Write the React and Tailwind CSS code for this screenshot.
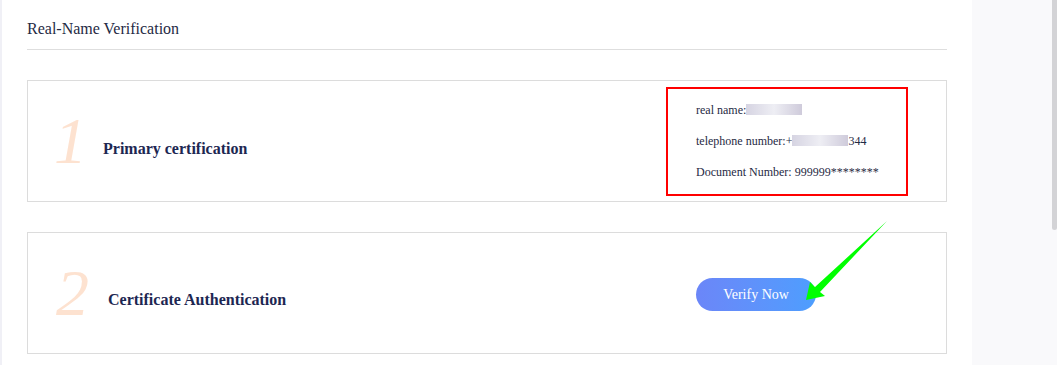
import React from "react";

const serif = { fontFamily: '"Liberation Serif", "Times New Roman", serif' };

function Blurred({ w }) {
  return (
    <span
      className={`inline-block h-[11px] align-[-1px] bg-gradient-to-r from-[#d6d4e2] via-[#eeeef4] to-[#cfcbdb] blur-[0.6px] ${w}`}
    ></span>
  );
}

function ArrowOverlay() {
  return (
    <svg
      className="absolute left-[800px] top-[218px] pointer-events-none"
      width="92"
      height="88"
      viewBox="800 218 92 88"
    >
      <polygon
        points="806,300 810,282 815,287 887,221 820,292 825,296"
        fill="#00ff00"
      />
    </svg>
  );
}

export default function App() {
  return (
    <div className="relative flex h-[365px] w-full overflow-hidden bg-[#f9f9fb]" style={serif}>
      {/* left strip */}
      <div className="w-[2px] bg-[#f0f0f6]"></div>

      {/* Main panel */}
      <div className="w-[970px] bg-white pl-[25px] pr-[25px] pt-[19px]">
        <h1 className="text-[16px] leading-[20px] text-[#1f2a44]" style={serif}>Real-Name Verification</h1>
        <div className="mt-[10px] h-px bg-[#dedede]"></div>

        {/* Step 1 */}
        <div className="mt-[30px] flex h-[122px] items-center border border-[#dcdcdc]">
          <div className="flex flex-1 items-center pl-[26px]">
            <span className="w-[49px] text-[66px] italic leading-none text-[#fde2d0]">1</span>
            <span className="pt-[16px] text-[16px] font-bold text-[#1d2752]" style={serif}>Primary certification</span>
          </div>
          <div className="mr-[38px] flex h-[109px] w-[242px] flex-col justify-center gap-[15px] border-2 border-[#ff0000] pl-[28px] text-[12px] leading-[16px] text-[#1f2a44]">
            <div>
              real name:<Blurred w="w-[56px]" />
            </div>
            <div>
              telephone number:+<Blurred w="w-[56px]" />344
            </div>
            <div>Document Number: 999999********</div>
          </div>
        </div>

        {/* Step 2 */}
        <div className="mt-[30px] flex h-[122px] items-center border border-[#dcdcdc]">
          <div className="flex flex-1 items-center pl-[28px]">
            <span className="w-[52px] text-[66px] italic leading-none text-[#fde2d0]">2</span>
            <span className="pt-[14px] text-[16px] font-bold text-[#1d2752]" style={serif}>Certificate Authentication</span>
          </div>
          <div className="mr-[38px] w-[242px] pl-[30px] pt-[2px]">
            <button className="h-[33px] w-[120px] rounded-full bg-gradient-to-r from-[#6b86f8] to-[#4d9efe] text-[14px] text-white" style={serif}>
              Verify Now
            </button>
          </div>
        </div>
      </div>

      {/* right gray area with scrollbar */}
      <div className="flex flex-1 justify-end">
        <div className="h-[230px] w-[5px] rounded-b-sm bg-[#d3d3d6]"></div>
      </div>

      <ArrowOverlay />
    </div>
  );
}
